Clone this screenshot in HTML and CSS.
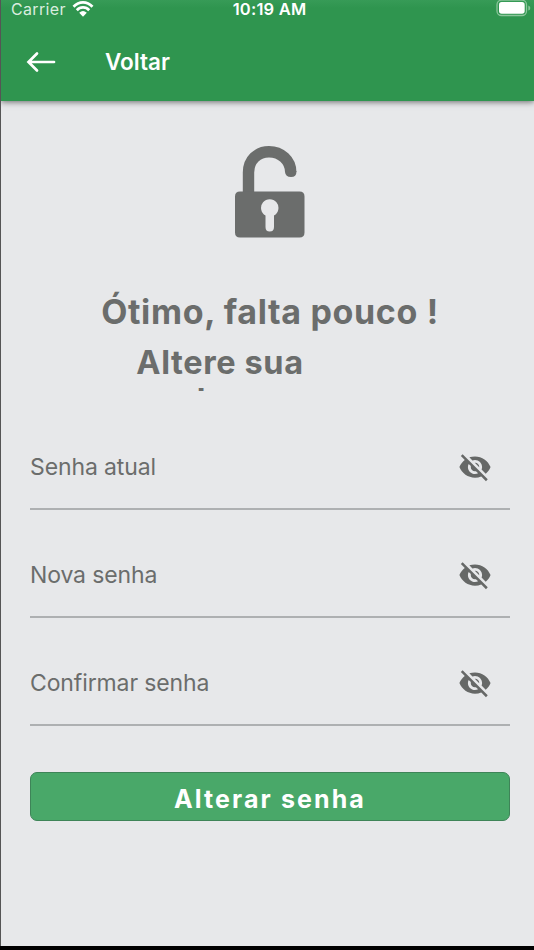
FILE: index.html
```html
<!DOCTYPE html>
<html lang="pt-BR">
<head>
<meta charset="utf-8">
<title>Alterar senha</title>
<link rel="stylesheet" href="styles.css">
</head>
<body>
<svg width="0" height="0" class="defs"><defs>
<symbol id="eye-off" viewBox="0 0 24 24"><path d="M12 7c2.76 0 5 2.24 5 5 0 .65-.13 1.26-.36 1.83l2.92 2.92c1.51-1.26 2.7-2.89 3.43-4.75-1.73-4.39-6-7.5-11-7.5-1.4 0-2.74.25-3.98.7l2.16 2.16C10.74 7.13 11.35 7 12 7zM2 4.27l2.28 2.28.46.46C3.08 8.3 1.78 10.02 1 12c1.73 4.39 6 7.5 11 7.5 1.55 0 3.03-.3 4.38-.84l.42.42L19.73 22 21 20.73 3.27 3 2 4.27zM7.53 9.8l1.55 1.55c-.05.21-.08.43-.08.65 0 1.66 1.34 3 3 3 .22 0 .44-.03.65-.08l1.55 1.55c-.67.33-1.41.53-2.2.53-2.76 0-5-2.24-5-5 0-.79.2-1.53.53-2.2zm4.31-.78l3.15 3.15.02-.16c0-1.66-1.34-3-3-3l-.17.01z"/></symbol>
</defs></svg>
<div class="screen">
  <header class="header">
    <div class="status">
      <div class="carrier"><span class="carrier-name">Carrier</span>
        <svg class="wifi" viewBox="0 0 22 16"><path d="M1.500 5.700C7-.1 15-.1 20.500 5.700M4.800 9.200C8.300 5.500 13.700 5.500 17.200 9.200" fill="none" stroke="#fff" stroke-width="2.700"/><path d="M7.200 11.800Q11 8.200 14.800 11.800L11 15.800Z" fill="#fff"/></svg>
      </div>
      <span class="time">10:19 AM</span>
      <svg class="battery" viewBox="0 0 36 18"><rect x="1" y=".2" width="29.500" height="15.300" rx="4.500" fill="none" stroke="#8bc59b" stroke-width="1.300"/><rect x="3" y="2" width="25.700" height="11.700" rx="2.700" fill="#fff"/><path d="M32.300 5.500v5q2-.5 2-2.500t-2-2.500" fill="#8bc59b"/></svg>
    </div>
    <nav class="bar">
      <svg class="back" viewBox="0 0 30 22"><path d="M28 11H3M11 2.500L2.500 11L11 19.500" fill="none" stroke="#fff" stroke-width="2.700" stroke-linecap="round"/></svg>
      <span class="title">Voltar</span>
    </nav>
  </header>
  <main class="content">
    <svg class="lock" viewBox="0 0 70 92"><path d="M13.500 50V26.500C13.500 14 22.500 5.700 34 5.700C46 5.700 55.700 14.500 55.700 26" fill="none" stroke="#6b6d6c" stroke-width="11.400"/><path d="M50 25H61.400V26Q61.500 31 56 31Q50.500 31 50 26Z" fill="#6b6d6c"/><path fill-rule="evenodd" fill="#6b6d6c" d="M5 45.500H64.500Q69.500 45.500 69.500 50.500V86.500Q69.500 91.500 64.500 91.500H5Q0 91.500 0 86.500V50.500Q0 45.500 5 45.500ZM30.500 69.500V81Q30.500 85.500 34.700 85.500Q39 85.500 39 81V69.500A8.700 8.700 0 1 0 30.500 69.500Z"/></svg>
    <h1 class="heading">Ótimo, falta pouco !</h1>
    <div class="sub"><span class="sub-line">Altere sua</span><span class="sub-line sub-next">senha</span></div>
    <form class="form">
      <div class="field"><span>Senha atual</span><svg class="eye"><use href="#eye-off"/></svg></div>
      <div class="field"><span>Nova senha</span><svg class="eye"><use href="#eye-off"/></svg></div>
      <div class="field"><span>Confirmar senha</span><svg class="eye"><use href="#eye-off"/></svg></div>
      <button class="submit" type="button"><span>Alterar senha</span></button>
    </form>
  </main>
</div>
</body>
</html>
```
FILE: styles.css
```css
* { box-sizing: border-box; }
body { margin: 0; background: #000; font-family: Inter, Roboto, sans-serif; }
.defs { display: block; }
.screen { height: 946px; background: #e7e8ea; border-left: 1px solid #555; overflow: hidden; }
.header { height: 101px; background: linear-gradient(#379b57, #2f954f 8px); color: #fff; box-shadow: 0 1px 6px rgba(0,0,0,.55); }
.status { height: 20px; display: grid; grid-template-columns: 1fr auto 1fr; align-items: start; line-height: 18px; }
.carrier { display: flex; padding-left: 10px; gap: 6px; color: #d9eddf; }
.carrier-name { font-size: 16px; letter-spacing: .35px; }
.wifi { width: 22px; height: 16px; margin-top: 1px; }
.time { font-size: 16.5px; font-weight: 600; letter-spacing: .2px; margin-left: 4px; }
.battery { width: 36px; height: 18px; justify-self: end; margin-right: 2px; }
.bar { height: 81px; display: flex; align-items: center; padding: 2px 0 0 25px; }
.back { width: 30px; height: 22px; }
.title { margin-left: 49px; font-size: 22.5px; font-weight: 600; }
.content { padding: 45px 24px 0 29px; color: #6b6d6c; }
.lock { display: block; width: 70px; height: 92px; margin-left: 205px; }
.heading { margin: 49px 0 0; font-size: 34px; line-height: 50px; font-weight: 650; letter-spacing: .65px; white-space: nowrap; text-align: center; }
.sub { height: 54px; width: 380px; overflow: hidden; display: flex; flex-direction: column; align-items: center; padding-top: 7px; font-size: 32.5px; font-weight: 650; line-height: 38px; letter-spacing: .6px; }
.sub-next { margin-right: 66px; }
.form { margin-top: 28px; }
.field { height: 108px; padding: 24px 18px 0 0; border-bottom: 2px solid #aeb0b2; display: flex; justify-content: space-between; align-items: center; font-size: 23px; letter-spacing: -.12px; }
.field:first-child { height: 91px; padding-top: 7px; }
.eye { width: 34px; height: 34px; fill: #666867; }
.submit { display: flex; align-items: center; justify-content: center; width: 480px; height: 49px; margin-top: 46px; padding: 5px 0 0; border: 1.5px solid #3e8458; border-radius: 7px; background: #49a869; color: #fff; font: 700 25px Inter, Roboto, sans-serif; letter-spacing: 2.1px; }
```
